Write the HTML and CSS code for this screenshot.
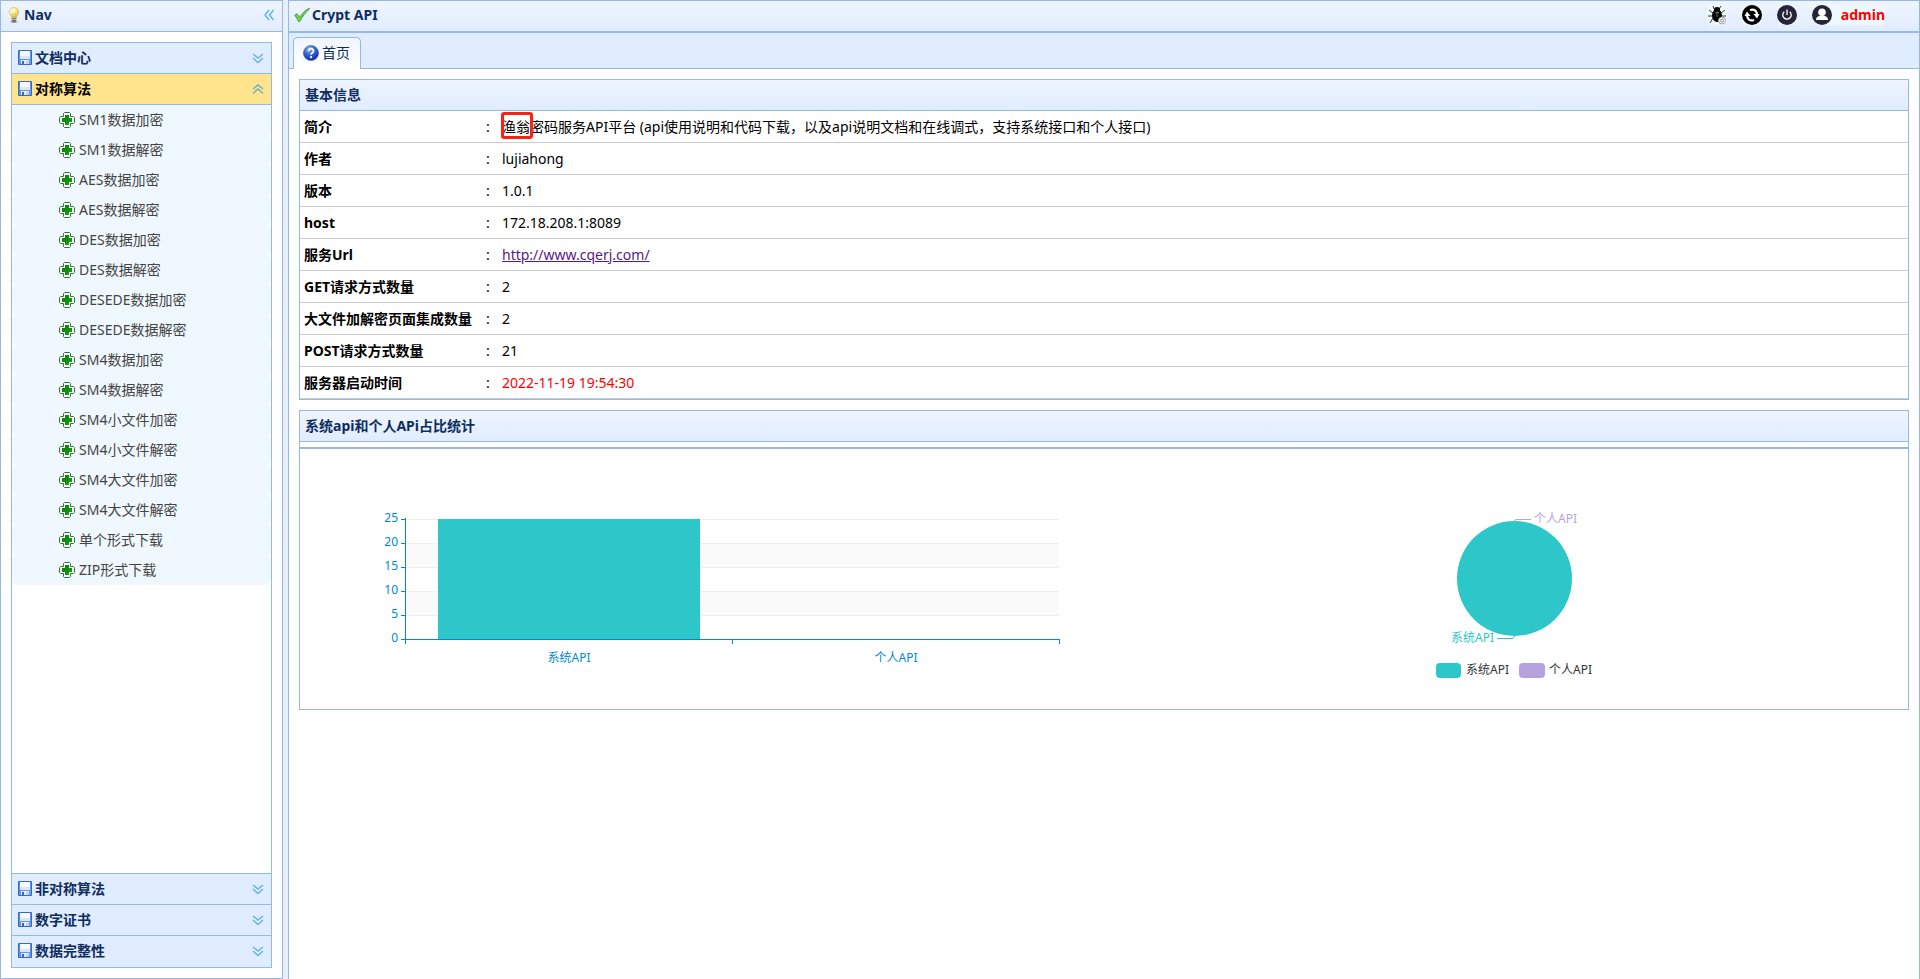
FILE: index.html
```html
<!DOCTYPE html>
<html lang="zh-CN">
<head>
<meta charset="utf-8">
<title>Crypt API</title>
<link rel="stylesheet" href="styles.css">
</head>
<body>
<svg class="defs" aria-hidden="true">
  <defs>
    <linearGradient id="plusFill" x1="0" y1="0" x2="1" y2="1"><stop offset="0" stop-color="#0a7d0a"/><stop offset="1" stop-color="#12a312"/></linearGradient>
    <linearGradient id="saveFill" x1="0" y1="0" x2="1" y2="1"><stop offset="0" stop-color="#5b86dc"/><stop offset="1" stop-color="#5aa5ff"/></linearGradient>
    <radialGradient id="helpFill" cx=".4" cy=".25" r=".8"><stop offset="0" stop-color="#8db4f0"/><stop offset=".5" stop-color="#2f62cf"/><stop offset="1" stop-color="#10259a"/></radialGradient>
    <radialGradient id="bulbFill" cx=".35" cy=".3" r=".7"><stop offset="0" stop-color="#fffde0"/><stop offset=".6" stop-color="#f6e582"/><stop offset="1" stop-color="#d9b53c"/></radialGradient>
    <symbol id="save" viewBox="0 0 16 16">
      <path d="M1.500.5h13v14h-13z" fill="url(#saveFill)" stroke="#3a67cc"/>
      <path d="M3 1h10v8H3z" fill="#f6f9fd"/><path d="M3 6h10v3H3z" fill="#d9e6f6"/>
      <path d="M4 10h8v4H4z" fill="#e8edf4"/><path d="M5 11h2v3H5z" fill="#3b66c8"/><path d="M9 11h3v3H9z" fill="#c9d2df"/>
    </symbol>
    <symbol id="plus" viewBox="0 0 16 16">
      <path d="M5.500.5h5l1 1v3h3l1 1v5l-1 1h-3v3l-1 1h-5l-1-1v-3h-3l-1-1v-5l1-1h3v-3z" fill="#fff" stroke="#347434"/>
      <path d="M6 3h4v3h3v4h-3v3H6v-3H3V6h3z" fill="url(#plusFill)"/>
    </symbol>
    <symbol id="down" viewBox="0 0 16 16"><path d="M3 4l5 4 5-4M3 8l5 4.500 5-4.500" fill="none" stroke="#67b3ea" stroke-width="1.500"/></symbol>
    <symbol id="up" viewBox="0 0 16 16"><path d="M3 8l5-4 5 4M3 12.500L8 8l5 4.500" fill="none" stroke="#67b3ba" stroke-width="1.500"/></symbol>
    <symbol id="left" viewBox="0 0 16 16"><path d="M8 3L4 8l4 5M12.500 3l-4 5 4 5" fill="none" stroke="#67b3ea" stroke-width="1.500"/></symbol>
  </defs>
</svg>

<aside class="nav">
  <header class="bar">
    <svg class="icon" viewBox="0 0 16 16"><ellipse cx="8" cy="15" rx="4" ry="1" fill="#b9bcc4"/><path d="M8 .5c3 0 4.700 2 4.700 4.600 0 2.400-2 3.500-2.300 5.900H5.600C5.300 8.600 3.300 7.500 3.300 5.100 3.300 2.500 5 .5 8 .5z" fill="url(#bulbFill)" stroke="#d2bd6a" stroke-width=".6"/><path d="M7 10.500L6.300 6.500l1.700 1 1.700-1L9 10.500" fill="none" stroke="#cfa93a" stroke-width=".6"/><path d="M5.700 11h4.600v3L9 15.500H7L5.700 14z" fill="#6e7079"/><path d="M5.700 12.300h4.600" stroke="#ddd" stroke-width=".8"/></svg>
    <h2 class="bar-title">Nav</h2>
    <button class="tool" type="button" aria-label="收起导航"><svg class="icon"><use href="#left"/></svg></button>
  </header>
  <div class="nav-body">
    <div class="accordion">
      <button class="fold" type="button"><svg class="icon"><use href="#save"/></svg><span class="fold-name">文档中心</span><svg class="icon"><use href="#down"/></svg></button>
      <button class="fold fold-open" type="button" aria-expanded="true"><svg class="icon"><use href="#save"/></svg><span class="fold-name">对称算法</span><svg class="icon"><use href="#up"/></svg></button>
      <nav class="fold-content">
        <a class="item" href="#"><svg class="icon"><use href="#plus"/></svg>SM1数据加密</a>
        <a class="item" href="#"><svg class="icon"><use href="#plus"/></svg>SM1数据解密</a>
        <a class="item" href="#"><svg class="icon"><use href="#plus"/></svg>AES数据加密</a>
        <a class="item" href="#"><svg class="icon"><use href="#plus"/></svg>AES数据解密</a>
        <a class="item" href="#"><svg class="icon"><use href="#plus"/></svg>DES数据加密</a>
        <a class="item" href="#"><svg class="icon"><use href="#plus"/></svg>DES数据解密</a>
        <a class="item" href="#"><svg class="icon"><use href="#plus"/></svg>DESEDE数据加密</a>
        <a class="item" href="#"><svg class="icon"><use href="#plus"/></svg>DESEDE数据解密</a>
        <a class="item" href="#"><svg class="icon"><use href="#plus"/></svg>SM4数据加密</a>
        <a class="item" href="#"><svg class="icon"><use href="#plus"/></svg>SM4数据解密</a>
        <a class="item" href="#"><svg class="icon"><use href="#plus"/></svg>SM4小文件加密</a>
        <a class="item" href="#"><svg class="icon"><use href="#plus"/></svg>SM4小文件解密</a>
        <a class="item" href="#"><svg class="icon"><use href="#plus"/></svg>SM4大文件加密</a>
        <a class="item" href="#"><svg class="icon"><use href="#plus"/></svg>SM4大文件解密</a>
        <a class="item" href="#"><svg class="icon"><use href="#plus"/></svg>单个形式下载</a>
        <a class="item" href="#"><svg class="icon"><use href="#plus"/></svg>ZIP形式下载</a>
      </nav>
      <button class="fold" type="button"><svg class="icon"><use href="#save"/></svg><span class="fold-name">非对称算法</span><svg class="icon"><use href="#down"/></svg></button>
      <button class="fold" type="button"><svg class="icon"><use href="#save"/></svg><span class="fold-name">数字证书</span><svg class="icon"><use href="#down"/></svg></button>
      <button class="fold" type="button"><svg class="icon"><use href="#save"/></svg><span class="fold-name">数据完整性</span><svg class="icon"><use href="#down"/></svg></button>
    </div>
  </div>
</aside>

<main class="main">
  <header class="bar">
    <svg class="icon" viewBox="0 0 16 16"><path d="M.7 8.200L3 6.800l2.600 3.600C8 6.500 11 3.500 15.300 1.200l.3.600C11.500 5.500 8.500 9.500 5.900 14.300l-1.400.3C3.500 12 2.300 10.200.7 8.200z" fill="#6fdc4f" stroke="#37852c" stroke-width=".8"/></svg>
    <h1 class="bar-title">Crypt API</h1>
    <div class="actions">
      <button class="action" type="button" aria-label="调试"><svg class="action-icon" viewBox="0 0 20 20"><path d="M7 4L6 1M12 4l2-3M6 8L2 5M14 8l4-3M5 11H1M14 11h5M6 13l-3 5" fill="none" stroke="#222" stroke-width=".9"/><ellipse cx="10" cy="4.500" rx="3" ry="2.500"/><ellipse cx="10" cy="10.500" rx="5" ry="6.500"/><path d="M8 8l2-1 2 1M10 7v5" fill="none" stroke="#999" stroke-width=".7"/><circle cx="15" cy="15.500" r="3.500" fill="#f1f3f7" stroke="#999" stroke-width=".9"/><circle cx="15" cy="15.500" r="1.500" fill="none" stroke="#777" stroke-width=".8"/></svg></button>
      <button class="action" type="button" aria-label="刷新"><svg class="action-icon" viewBox="0 0 20 20"><circle cx="10" cy="10" r="10"/><path d="M8 5c4-1.500 7 1 7 5M12 15c-4 1.500-7-1-7-5" fill="none" stroke="#fff" stroke-width="2.200"/><path d="M11.500 9h6l-2.500 4.500zM8.500 11h-6L5 6.500z" fill="#fff"/></svg></button>
      <button class="action" type="button" aria-label="退出"><svg class="action-icon" viewBox="0 0 20 20"><circle cx="10" cy="10" r="10" fill="#25243a"/><path d="M7.300 6.700a4.200 4.200 0 1 0 5.400 0M10 4.500V10" fill="none" stroke="#fff" stroke-width="1.300"/></svg></button>
      <a class="user" href="#"><svg class="action-icon" viewBox="0 0 20 20"><circle cx="10" cy="10" r="10" fill="#25243a"/><circle cx="10" cy="7.200" r="3.800" fill="#fff"/><path d="M4 15c0-3 2-3.800 4-4.300h4c2 .5 4 1.300 4 4.300z" fill="#fff"/></svg>admin</a>
    </div>
  </header>
  <div class="tabs" role="tablist">
    <button class="tab" type="button" role="tab" aria-selected="true"><svg class="icon" viewBox="0 0 16 16"><circle cx="8" cy="8" r="7.600" fill="url(#helpFill)" stroke="#3c58b4" stroke-width=".6"/><path d="M5.500 6.200c0-3.500 5.200-3.300 5 0-.1 1.700-2.400 1.700-2.400 3.500" fill="none" stroke="#fff" stroke-width="1.700"/><circle cx="8.100" cy="12.200" r="1.100" fill="#fff"/></svg>首页</button>
  </div>
  <div class="content">
    <section class="panel">
      <h2 class="panel-head">基本信息</h2>
      <table class="info">
        <tr><th scope="row">简介</th><td class="colon">:</td><td><span class="marked">渔翁</span>密码服务API平台 (api使用说明和代码下载，以及api说明文档和在线调式，支持系统接口和个人接口)</td></tr>
        <tr><th scope="row">作者</th><td class="colon">:</td><td>lujiahong</td></tr>
        <tr><th scope="row">版本</th><td class="colon">:</td><td>1.0.1</td></tr>
        <tr><th scope="row">host</th><td class="colon">:</td><td>172.18.208.1:8089</td></tr>
        <tr><th scope="row">服务Url</th><td class="colon">:</td><td><a class="link" href="http://www.cqerj.com/">http://www.cqerj.com/</a></td></tr>
        <tr><th scope="row">GET请求方式数量</th><td class="colon">:</td><td>2</td></tr>
        <tr><th scope="row">大文件加解密页面集成数量</th><td class="colon">:</td><td>2</td></tr>
        <tr><th scope="row">POST请求方式数量</th><td class="colon">:</td><td>21</td></tr>
        <tr><th scope="row">服务器启动时间</th><td class="colon">:</td><td class="time">2022-11-19 19:54:30</td></tr>
      </table>
    </section>
    <section class="panel">
      <h2 class="panel-head">系统api和个人APi占比统计</h2>
      <div class="charts">
        <svg class="bar-chart" viewBox="0 0 900 260" role="img" aria-label="API数量柱状图">
          <path d="M106 95h653v24H106zM106 143h653v24H106z" fill="#fafafa"/>
          <path d="M106 70.500h653M106 94.500h653M106 118.500h653M106 142.500h653M106 166.500h653" stroke="#eee"/>
          <path d="M138 70h262v120H138z" fill="#2ec7c9"/>
          <path d="M105.500 69v126M101 70.500h5M101 94.500h5M101 118.500h5M101 142.500h5M101 166.500h5M101 190.500h659M432.500 190v5M759.500 190v5" stroke="#008acd" fill="none"/>
          <g class="axis axis-y"><text x="98" y="73">25</text><text x="98" y="97">20</text><text x="98" y="121">15</text><text x="98" y="145">10</text><text x="98" y="169">5</text><text x="98" y="193">0</text></g>
          <g class="axis axis-x"><text x="269" y="213">系统API</text><text x="596" y="213">个人API</text></g>
        </svg>
        <svg class="pie-chart" viewBox="0 0 708 260" role="img" aria-label="API占比饼图">
          <path d="M314 72l2-1.500h15" fill="none" stroke="#b6a2de"/>
          <path d="M315 187l-2 2.500h-16" fill="none" stroke="#2ec7c9"/>
          <circle cx="314.500" cy="129.500" r="57.500" fill="#2ec7c9"/>
          <text class="label-personal" x="334" y="74">个人API</text>
          <text class="label-system" x="251" y="193">系统API</text>
          <rect x="236" y="214" width="25" height="15" rx="4" fill="#2ec7c9"/><text class="legend" x="266" y="225">系统API</text>
          <rect x="319" y="214" width="26" height="15" rx="4" fill="#b6a2de"/><text class="legend" x="349" y="225">个人API</text>
        </svg>
      </div>
    </section>
  </div>
</main>
</body>
</html>
```

FILE: styles.css
```css
*, *::after { box-sizing: border-box; }

body {
  margin: 0;
  height: 100vh;
  display: flex;
  gap: 5px;
  background: #e6effa;
  color: #000;
  font: 14px/20px "Noto Sans", "Noto Sans CJK SC", sans-serif;
}

h1, h2 { margin: 0; font-size: 14px; }

button {
  margin: 0;
  padding: 0;
  border: 0;
  background: none;
  color: inherit;
  font: inherit;
  cursor: pointer;
}

.defs { position: absolute; width: 0; height: 0; }
.icon { width: 16px; height: 16px; flex: none; display: block; }

.bar {
  height: 31px;
  flex: none;
  display: flex;
  align-items: center;
  gap: 2px;
  padding: 0 5px 2px;
  border-bottom: 1px solid #95b8e7;
  background: linear-gradient(#eff5ff, #e0ecff);
  color: #0e2d5f;
}
.bar-title { flex: 1; }

/* Navigation */
.nav {
  width: 283px;
  flex: none;
  display: flex;
  flex-direction: column;
  border: 1px solid #95b8e7;
  background: #fff;
}
.nav-body { flex: 1; min-height: 0; display: flex; padding: 10px; }
.accordion {
  flex: 1;
  display: flex;
  flex-direction: column;
  border: 1px solid #95b8e7;
}
.fold {
  height: 31px;
  flex: none;
  display: flex;
  align-items: center;
  gap: 2px;
  padding: 0 5px;
  border-bottom: 1px solid #95b8e7;
  background: #e0ecff;
  color: #0e2d5f;
  font-weight: bold;
  text-align: left;
}
.fold:last-child { border-bottom-color: #e0ecff; }
.fold-open { background: #ffe48d; color: #000; }
.fold-name { flex: 1; }
.fold-content {
  flex: 1;
  min-height: 0;
  overflow: auto;
  border-bottom: 1px solid #95b8e7;
}
.item {
  height: 30px;
  display: flex;
  align-items: center;
  gap: 4px;
  padding-left: 47px;
  border-radius: 5px;
  background: #f0f8ff;
  color: #444;
  text-decoration: none;
}

/* Main area */
.main {
  flex: 1;
  min-width: 0;
  display: flex;
  flex-direction: column;
  border: 1px solid #95b8e7;
  border-bottom: 0;
  background: #fff;
}
.actions { display: flex; gap: 15px; padding-right: 29px; }
.action, .user { border-radius: 5px; background: #f0f8ff; }
.action-icon { width: 20px; height: 20px; display: block; }
.user {
  display: flex;
  gap: 9px;
  color: #f00;
  font-weight: bold;
  text-decoration: none;
}
.tabs {
  height: 37px;
  flex: none;
  display: flex;
  padding: 4px 4px 0;
  border: solid #95b8e7;
  border-width: 1px 0;
  background: #e0ecff;
}
.tab {
  height: 32px;
  display: flex;
  align-items: center;
  gap: 3px;
  padding: 0 10px 2px 9px;
  border: 1px solid #95b8e7;
  border-bottom: 0;
  border-radius: 5px 5px 0 0;
  background: linear-gradient(#eff5ff, #fff);
  color: #0e2d5f;
}

.content {
  flex: 1;
  min-height: 0;
  overflow: auto;
  display: flex;
  flex-direction: column;
  gap: 10px;
  padding: 10px;
}
.panel { flex: none; border: 1px solid #95b8e7; }
.panel-head {
  padding: 5px;
  border-bottom: 1px solid #95b8e7;
  background: linear-gradient(#eff5ff, #e0ecff);
  color: #0e2d5f;
}

.info { width: 100%; table-layout: fixed; border-collapse: separate; border-spacing: 0; }
.info th, .info td {
  height: 32px;
  padding: 0 4px;
  border-bottom: 1px solid #ccc;
  text-align: left;
}
.info th { width: 178px; white-space: nowrap; }
.info .colon { width: 20px; text-align: center; }
.info .time { color: #f00; }
.link { color: #551a8b; }
.marked { position: relative; }
.marked::after {
  content: "";
  position: absolute;
  top: 50%;
  left: -1px;
  width: 32px;
  height: 27px;
  margin-top: -14px;
  border: 3px solid #ff1f14;
  border-radius: 3px;
}

/* Charts */
.charts { display: flex; margin-top: 5px; border-top: 2px solid #95b8e7; }
.bar-chart { flex: 900 1 0; min-width: 0; display: block; }
.pie-chart { flex: 708 1 0; min-width: 0; display: block; }
.charts text { font-size: 12px; }
.axis { fill: #008acd; }
.axis-y { text-anchor: end; }
.axis-x { text-anchor: middle; }
.label-personal { fill: #b6a2de; }
.label-system { fill: #2ec7c9; }
.legend { fill: #333; }
```
